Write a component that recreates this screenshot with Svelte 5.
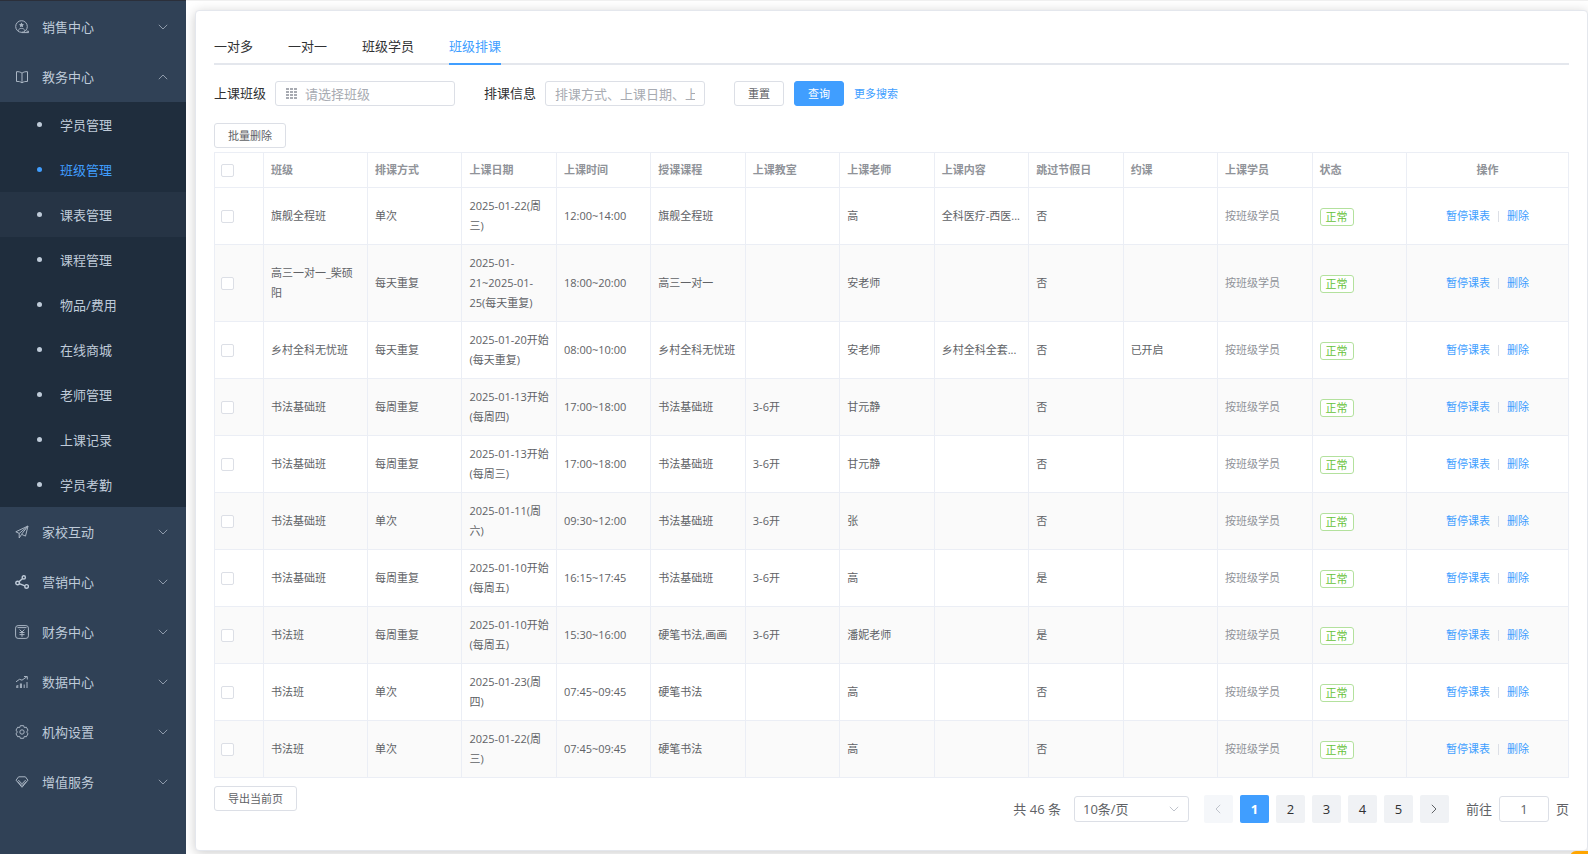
<script>
	const menus = [
		{ icon: 'sales', title: '销售中心' },
		{
			icon: 'book',
			title: '教务中心',
			open: true,
			children: [
				'学员管理',
				'班级管理',
				'课表管理',
				'课程管理',
				'物品/费用',
				'在线商城',
				'老师管理',
				'上课记录',
				'学员考勤'
			]
		},
		{ icon: 'plane', title: '家校互动' },
		{ icon: 'share', title: '营销中心' },
		{ icon: 'money', title: '财务中心' },
		{ icon: 'chart', title: '数据中心' },
		{ icon: 'gear', title: '机构设置' },
		{ icon: 'diamond', title: '增值服务' }
	];

	const tabs = ['一对多', '一对一', '班级学员', '班级排课'];

	const columns = [
		'班级',
		'排课方式',
		'上课日期',
		'上课时间',
		'授课课程',
		'上课教室',
		'上课老师',
		'上课内容',
		'跳过节假日',
		'约课',
		'上课学员',
		'状态'
	];

	// name, mode, date, time, course, room, teacher, content, skip holidays, booking
	const data = [
		['旗舰全程班', '单次', '2025-01-22(周三)', '12:00~14:00', '旗舰全程班', '', '高', '全科医疗-西医...', '否', ''],
		['高三一对一_柴硕阳', '每天重复', '2025-01-21~2025-01-25(每天重复)', '18:00~20:00', '高三一对一', '', '安老师', '', '否', ''],
		['乡村全科无忧班', '每天重复', '2025-01-20开始(每天重复)', '08:00~10:00', '乡村全科无忧班', '', '安老师', '乡村全科全套...', '否', '已开启'],
		['书法基础班', '每周重复', '2025-01-13开始(每周四)', '17:00~18:00', '书法基础班', '3-6开', '甘元静', '', '否', ''],
		['书法基础班', '每周重复', '2025-01-13开始(每周三)', '17:00~18:00', '书法基础班', '3-6开', '甘元静', '', '否', ''],
		['书法基础班', '单次', '2025-01-11(周六)', '09:30~12:00', '书法基础班', '3-6开', '张', '', '否', ''],
		['书法基础班', '每周重复', '2025-01-10开始(每周五)', '16:15~17:45', '书法基础班', '3-6开', '高', '', '是', ''],
		['书法班', '每周重复', '2025-01-10开始(每周五)', '15:30~16:00', '硬笔书法,画画', '3-6开', '潘妮老师', '', '是', ''],
		['书法班', '单次', '2025-01-23(周四)', '07:45~09:45', '硬笔书法', '', '高', '', '否', ''],
		['书法班', '单次', '2025-01-22(周三)', '07:45~09:45', '硬笔书法', '', '高', '', '否', '']
	];

	let rows = $state(data.map((cells) => ({ cells, checked: false })));
	let activeMenu = $state('班级管理');
	let activeTab = $state('班级排课');
	let page = $state(1);
	let goto = $state('1');
	let pageSize = $state('10');
	let className = $state('');
	let keyword = $state('');

	let allChecked = $derived(rows.every((r) => r.checked));

	function toggleAll(e) {
		for (const row of rows) {
			row.checked = e.target.checked;
		}
	}

	function reset() {
		className = '';
		keyword = '';
	}

	function setPage(p) {
		page = Math.min(5, Math.max(1, Number(p) || 1));
		goto = String(page);
	}
</script>

{#snippet icon(name)}
	<svg class="icon" viewBox="0 0 14 14" aria-hidden="true">
		{#if name === 'sales'}
			<circle cx="6.5" cy="6.5" r="5.8" />
			<path
				class="solid"
				d="M6.5 2.6l.8 1.500 1.700.3-1.200 1.200.3 1.700-1.600-.8-1.600.8.3-1.700L4 4.400l1.700-.3z"
			/>
			<path d="M3 10.800c.6-1.600 1.800-2.400 3.500-2.400s2.900.8 3.500 2.400M6.500 12.600h7v-1.400h-2" />
		{:else if name === 'book'}
			<path
				d="M7 3.2C5.800 2 3.500 1.500 1.500 1.700v9.800c2-.2 4.300.2 5.500 1.400 1.200-1.200 3.500-1.600 5.500-1.400V1.700C10.500 1.500 8.200 2 7 3.200zM7 3.200V13"
			/>
		{:else if name === 'plane'}
			<path d="M13 1L.8 6.800l3.400 1.600L13 1 6.500 9.300l4 1.800L13 1M4.200 8.400v4.600l2.300-3.500" />
		{:else if name === 'share'}
			<g class="thick">
				<circle cx="2.600" cy="8" r="1.800" />
				<circle cx="8.800" cy="2.400" r="1.600" />
				<circle cx="11.600" cy="11.400" r="1.800" />
				<path d="M4 6.800l3.600-3.300M4.300 8.600l5.600 2.200" />
			</g>
		{:else if name === 'money'}
			<rect x=".6" y=".6" width="12.800" height="12.800" rx="2.500" />
			<path d="M2.500 2.600h9M4.600 4.500L7 7l2.400-2.500M7 7v4.800M4.500 7.500h5M4.500 9.600h5" />
		{:else if name === 'chart'}
			<path
				d="M1.800 13v-2.500M2.800 10v3M5.400 13V8.500M6.400 8.500V13M9.200 13V9.500M12 13V7M1 6.800L4.500 4.300l2.500.9 4.800-3.400M9 1.500h3.300v3"
			/>
		{:else if name === 'gear'}
			<path
				d="M5.300.7h3.400l.6 1.900 2-.4 1.700 2.900L11.700 7l1.300 1.900-1.700 2.900-2-.4-.6 1.900H5.300l-.6-1.900-2 .4L1 8.900 2.300 7 1 5.100l1.700-2.900 2 .4z"
			/>
			<circle cx="7" cy="7" r="2.200" />
		{:else}
			<path d="M3.600 1.800h6.800l2.500 3.400L7 12.300 1.100 5.200zM3.300 5L7 8.800 10.700 5M2.500 6.500L7 10.500l4.500-4" />
		{/if}
	</svg>
{/snippet}

{#snippet chevron()}
	<svg class="chevron" viewBox="0 0 10 6" aria-hidden="true"><path d="M.8 .8L5 5 9.200 .8" /></svg>
{/snippet}

<div class="layout">
	<nav class="sidebar">
		{#each menus as menu}
			<button class="menu-title" class:open={menu.open} type="button">
				{@render icon(menu.icon)}
				<span>{menu.title}</span>
				{@render chevron()}
			</button>
			{#if menu.children}
				<ul class="submenu">
					{#each menu.children as child}
						<li>
							<a
								href="#{child}"
								class:active={activeMenu === child}
								class:hover={child === '课表管理'}
								onclick={() => (activeMenu = child)}>{child}</a
							>
						</li>
					{/each}
				</ul>
			{/if}
		{/each}
	</nav>

	<main class="main">
		<section class="card">
			<div class="tabs" role="tablist">
				{#each tabs as tab}
					<button
						type="button"
						role="tab"
						class="tab"
						class:active={activeTab === tab}
						aria-selected={activeTab === tab}
						onclick={() => (activeTab = tab)}>{tab}</button
					>
				{/each}
			</div>

			<form class="search" onsubmit={(e) => e.preventDefault()}>
				<div class="field">
					<label for="class-name">上课班级</label>
					<div class="input class-input">
						<svg class="grid-icon" viewBox="0 0 11 11" aria-hidden="true">
							{#each [0, 4, 8] as x}
								{#each [0, 3, 6, 9] as y}
									<rect {x} {y} width="3" height="2" />
								{/each}
							{/each}
						</svg>
						<input id="class-name" type="text" placeholder="请选择班级" bind:value={className} />
					</div>
				</div>
				<div class="field">
					<label for="keyword">排课信息</label>
					<div class="input keyword-input">
						<input
							id="keyword"
							type="text"
							placeholder="排课方式、上课日期、上课时间"
							bind:value={keyword}
						/>
					</div>
				</div>
				<div class="buttons">
					<button class="btn" type="button" onclick={reset}>重置</button>
					<button class="btn primary" type="submit">查询</button>
					<button class="link" type="button">更多搜索</button>
				</div>
			</form>

			<button class="btn" type="button">批量删除</button>

			<table>
				<colgroup>
					<col class="col-check" />
					<col class="col-name" />
					{#each columns.slice(1) as _}
						<col />
					{/each}
					<col class="col-action" />
				</colgroup>
				<thead>
					<tr>
						<th class="check">
							<input type="checkbox" aria-label="全选" checked={allChecked} onchange={toggleAll} />
						</th>
						{#each columns as c}
							<th>{c}</th>
						{/each}
						<th class="action">操作</th>
					</tr>
				</thead>
				<tbody>
					{#each rows as row}
						<tr>
							<td class="check">
								<input type="checkbox" aria-label={row.cells[0]} bind:checked={row.checked} />
							</td>
							{#each row.cells as cell}
								<td>{cell}</td>
							{/each}
							<td class="muted">按班级学员</td>
							<td><span class="tag">正常</span></td>
							<td class="action">
								<div class="actions">
									<button class="link" type="button">暂停课表</button>
									<i class="divider"></i>
									<button class="link" type="button">删除</button>
								</div>
							</td>
						</tr>
					{/each}
				</tbody>
			</table>

			<div class="footer">
				<button class="btn" type="button">导出当前页</button>
				<div class="pagination">
					<span class="total">共 46 条</span>
					<div class="size">
						<select aria-label="每页条数" bind:value={pageSize}>
							<option value="10">10条/页</option>
							<option value="20">20条/页</option>
							<option value="50">50条/页</option>
						</select>
						{@render chevron()}
					</div>
					<div class="pager">
						<button
							class="prev"
							type="button"
							aria-label="上一页"
							disabled={page === 1}
							onclick={() => setPage(page - 1)}>{@render chevron()}</button
						>
						{#each [1, 2, 3, 4, 5] as p}
							<button type="button" class:active={page === p} onclick={() => setPage(p)}>{p}</button>
						{/each}
						<button
							class="next"
							type="button"
							aria-label="下一页"
							disabled={page === 5}
							onclick={() => setPage(page + 1)}>{@render chevron()}</button
						>
					</div>
					<label class="jump">
						前往
						<input type="text" bind:value={goto} onchange={() => setPage(goto)} />
						页
					</label>
				</div>
			</div>
		</section>
	</main>
	<button class="float" type="button" aria-label="客服"></button>
</div>

<style>
	:global(body) {
		margin: 0;
		overflow: hidden;
		background: #fff;
	}

	.layout,
	.layout * {
		box-sizing: border-box;
	}

	.layout {
		display: flex;
		min-height: 100vh;
		font-family: 'Open Sans', 'Noto Sans CJK SC', sans-serif;
		font-size: 13px;
		line-height: 20px;
		color: #303133;
	}

	button,
	input,
	select {
		margin: 0;
		padding: 0;
		border: none;
		background: none;
		font: inherit;
		color: inherit;
	}

	button {
		cursor: pointer;
	}

	.sidebar {
		flex: none;
		width: 186px;
		padding-top: 1px;
		border-top: 1px solid #2b2f3a;
		background: #304156;
		color: #bfcbd9;
	}

	.menu-title {
		display: flex;
		align-items: center;
		gap: 13px;
		width: 100%;
		height: 50px;
		padding: 0 18px 0 15px;
		text-align: left;
	}

	.icon {
		width: 14px;
		height: 14px;
		fill: none;
		stroke: #aab6c4;
		stroke-width: 1;
	}

	.icon .solid {
		fill: #aab6c4;
		stroke: none;
	}

	.icon .thick {
		stroke: #bfcbd9;
		stroke-width: 1.4;
	}

	.chevron {
		width: 10px;
		height: 6px;
		fill: none;
		stroke: #8f9bab;
	}

	.menu-title .chevron {
		margin-left: auto;
	}

	.menu-title.open .chevron {
		transform: rotate(180deg);
	}

	.submenu {
		margin: 0;
		padding: 0;
		list-style: none;
		background: #1f2d3d;
	}

	.submenu a {
		display: flex;
		align-items: center;
		gap: 18px;
		height: 45px;
		padding-left: 37px;
		color: #bfcbd9;
		text-decoration: none;
	}

	.submenu a::before {
		content: '';
		width: 5px;
		height: 5px;
		border-radius: 50%;
		background: currentColor;
	}

	.submenu a.active {
		color: #409eff;
	}

	.submenu a.hover,
	.submenu a:hover {
		background: #263445;
	}

	.main {
		display: grid;
		flex: 1;
		min-width: 0;
		padding: 9px 0 3px 9px;
		border-top: 1px solid #f0f0f0;
	}

	.card {
		min-width: 0;
		padding: 24px 18px 20px;
		border: 1px solid #e4e7ed;
		border-radius: 4px;
		background: #fff;
		box-shadow: 0 2px 12px rgba(0, 0, 0, 0.2);
	}

	.tabs {
		display: flex;
		gap: 35px;
		border-bottom: 2px solid #e4e7ed;
	}

	.tab {
		height: 30px;
		margin-bottom: -2px;
		padding-bottom: 6px;
		border-bottom: 2px solid transparent;
	}

	.tab.active {
		color: #409eff;
		border-color: #409eff;
	}

	.search {
		display: flex;
		align-items: center;
		gap: 29px;
		margin: 16px 0 17px;
	}

	.field {
		display: flex;
		align-items: center;
		gap: 9px;
	}

	.field label {
		padding-bottom: 2px;
	}

	.input {
		display: flex;
		align-items: center;
		gap: 8px;
		height: 25px;
		padding: 0 9px;
		border: 1px solid #dcdfe6;
		border-radius: 3px;
	}

	.input input {
		flex: 1;
		min-width: 0;
		outline: none;
		color: #606266;
	}

	.input input::placeholder {
		color: #a8abb2;
	}

	.class-input {
		width: 180px;
	}

	.class-input .grid-icon {
		margin-left: 1px;
	}

	.keyword-input {
		width: 160px;
	}

	.grid-icon {
		flex: none;
		width: 11px;
		height: 11px;
		fill: #a8abb2;
		shape-rendering: crispEdges;
	}

	.buttons {
		display: flex;
		align-items: center;
		gap: 10px;
	}

	.btn {
		height: 25px;
		padding: 0 13px;
		border: 1px solid #dcdfe6;
		border-radius: 3px;
		background: #fff;
		font-size: 11px;
		color: #606266;
	}

	.btn.primary {
		border-color: #409eff;
		background: #409eff;
		color: #fff;
	}

	.link {
		font-size: 11px;
		color: #409eff;
	}

	table {
		width: 100%;
		margin-top: 4px;
		table-layout: fixed;
		border-collapse: separate;
		border-spacing: 0;
		border-top: 1px solid #ebeef5;
		border-left: 1px solid #ebeef5;
		font-size: 11px;
		color: #606266;
	}

	.col-check {
		width: 49px;
	}

	.col-name {
		width: 104px;
	}

	.col-action {
		width: 162px;
	}

	th,
	td {
		padding: 8px 7px;
		border-right: 1px solid #ebeef5;
		border-bottom: 1px solid #ebeef5;
		text-align: left;
	}

	th {
		padding: 7px;
		font-weight: 700;
		color: #909399;
	}

	.check {
		padding-left: 6px;
	}

	th.action,
	td.action {
		text-align: center;
	}

	tbody tr:nth-child(even) {
		background: #fafafa;
	}

	table input {
		display: block;
		width: 13px;
		height: 13px;
		appearance: none;
		border: 1px solid #dcdfe6;
		border-radius: 2px;
		background: #fff;
	}

	table input:checked {
		border-color: #409eff;
		background: #409eff;
	}

	.muted {
		color: #909399;
	}

	.tag {
		display: inline-block;
		height: 18px;
		padding: 0 5px;
		border: 1px solid #b3e19d;
		border-radius: 3px;
		background: #fff;
		line-height: 16px;
		vertical-align: middle;
		color: #67c23a;
	}

	.actions {
		display: flex;
		align-items: center;
		justify-content: center;
		gap: 8px;
	}

	.divider {
		width: 1px;
		height: 11px;
		background: #dcdfe6;
	}

	.footer {
		display: flex;
		justify-content: space-between;
		margin-top: 8px;
	}

	.pagination {
		display: flex;
		align-items: center;
		margin-top: 9px;
		color: #606266;
	}

	.size {
		display: flex;
		align-items: center;
		width: 115px;
		height: 26px;
		margin: 0 15px 0 13px;
		padding-right: 9px;
		border: 1px solid #dcdfe6;
		border-radius: 3px;
	}

	.size select {
		flex: 1;
		padding-left: 8px;
		appearance: none;
		outline: none;
	}

	.size .chevron {
		stroke: #c0c4cc;
	}

	.pager {
		display: flex;
		gap: 7px;
	}

	.pager button {
		width: 29px;
		height: 28px;
		border-radius: 2px;
		background: #f0f2f5;
		color: #303133;
	}

	.pager button.active {
		background: #409eff;
		font-weight: 700;
		color: #fff;
	}

	.pager button:disabled {
		background: #f5f7fa;
	}

	.pager .chevron {
		display: block;
		margin: 0 auto;
		stroke: #606266;
	}

	.pager :disabled .chevron {
		stroke: #c0c4cc;
	}

	.prev .chevron {
		transform: rotate(90deg);
	}

	.next .chevron {
		transform: rotate(-90deg);
	}

	.jump {
		display: flex;
		align-items: center;
		gap: 7px;
		margin-left: 17px;
	}

	.jump input {
		width: 50px;
		height: 26px;
		border: 1px solid #dcdfe6;
		border-radius: 3px;
		text-align: center;
	}

	/* floating service button, tucked below the fold */
	.float {
		position: fixed;
		right: 0;
		bottom: -33px;
		width: 18px;
		height: 36px;
		border-radius: 6px 0 0 6px;
		background: #ffa500;
	}
</style>
